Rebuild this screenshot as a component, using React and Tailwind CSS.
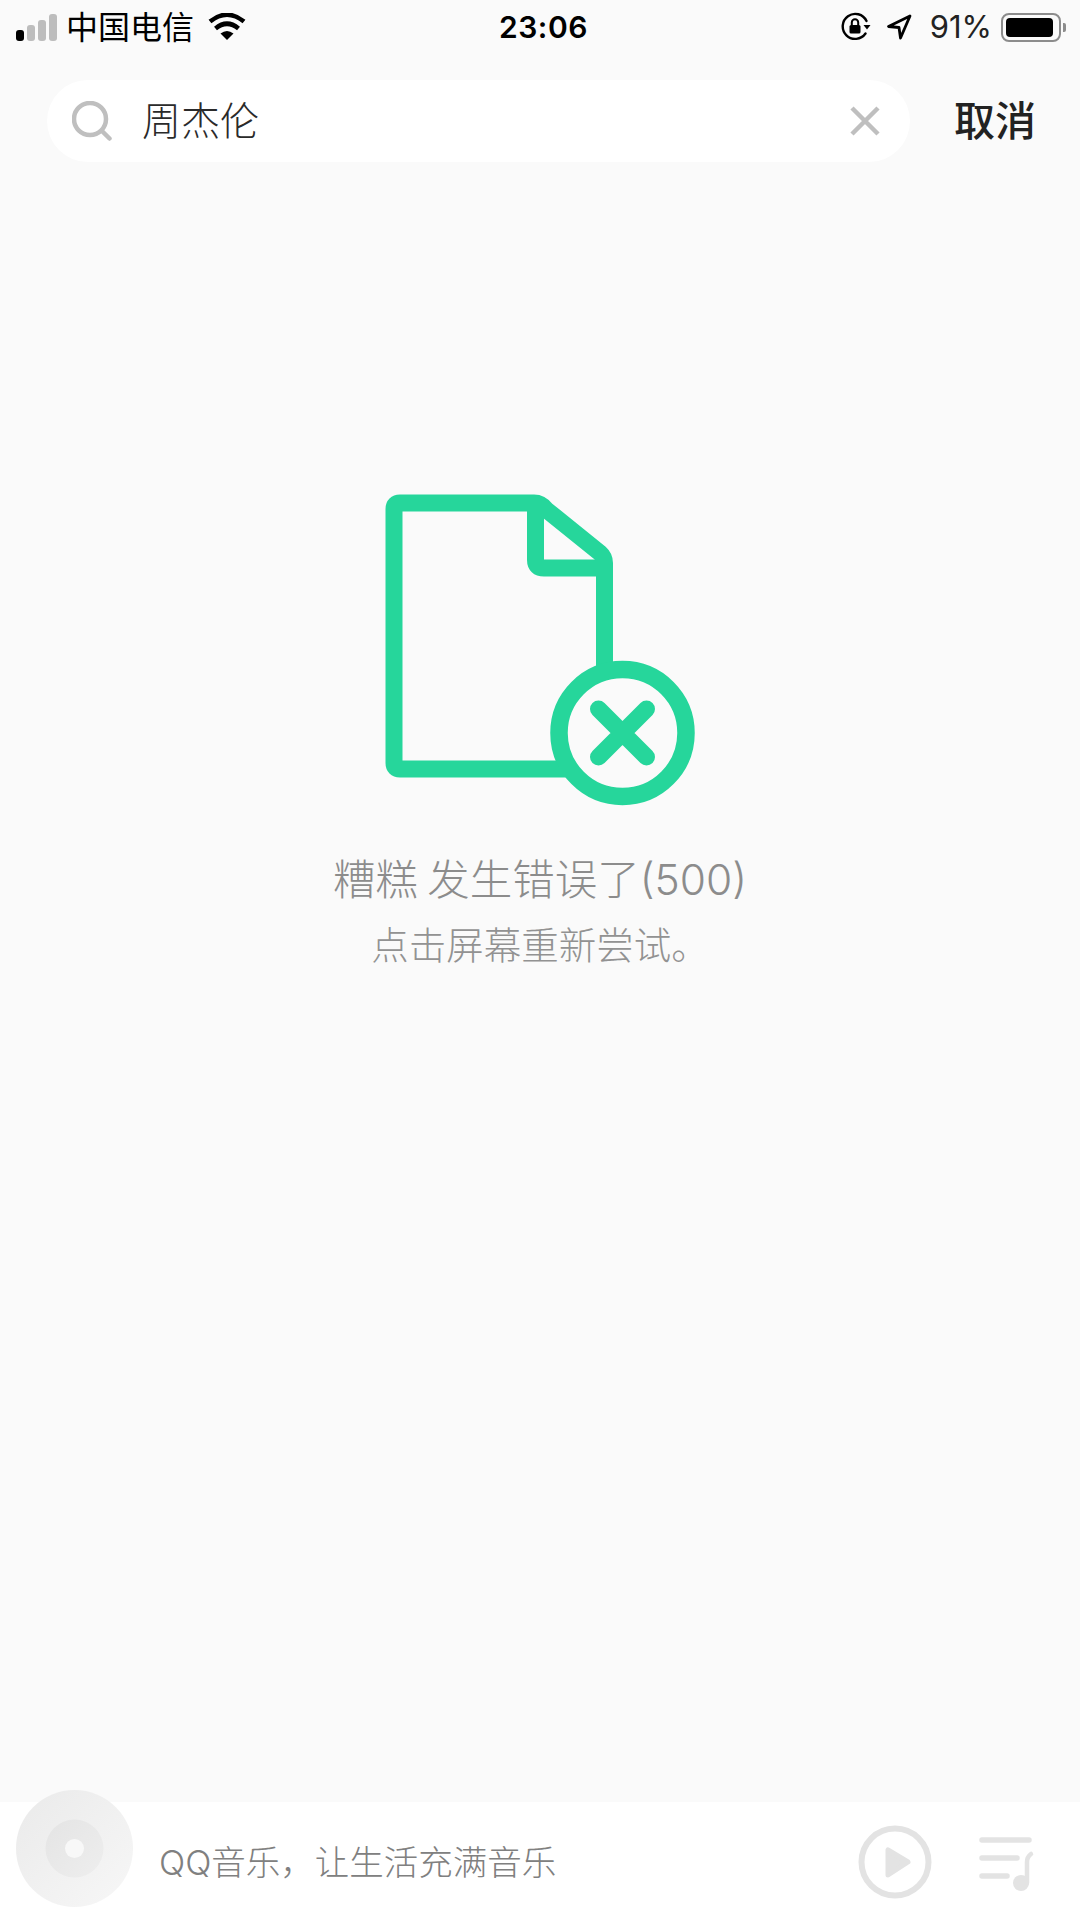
const cjk = { fontFamily: '"Noto Sans CJK SC", sans-serif' };
const latin = { fontFamily: 'Inter, "Noto Sans CJK SC", sans-serif' };

function Signal() {
  return (
    <div className="flex items-end gap-[3px] w-[43px] h-[27px]">
      <div className="w-[8px] h-[11px] rounded-[3px] bg-black" />
      <div className="w-[8px] h-[16px] rounded-[3px] bg-[#bdbdbd]" />
      <div className="w-[8px] h-[21px] rounded-[3px] bg-[#bdbdbd]" />
      <div className="w-[8px] h-[27px] rounded-[3px] bg-[#bdbdbd]" />
    </div>
  );
}

function Wifi() {
  return (
    <svg width="38" height="28" viewBox="0 0 38 28" fill="none">
      <path d="M19 27 L12.5 20.5 Q19 15.5 25.5 20.5 Z" fill="#000" />
      <path d="M7.5 15.5 Q19 6 30.5 15.5" stroke="#000" strokeWidth="4.6" />
      <path d="M2 8.5 Q19 -5 36 8.5" stroke="#000" strokeWidth="4.6" />
    </svg>
  );
}

function RotationLock() {
  return (
    <svg width="30" height="30" viewBox="0 0 30 30" fill="none">
      <path d="M24.5 21.5 A12.5 12.5 0 1 1 25.5 9" stroke="#000" strokeWidth="2.4" strokeLinecap="round" />
      <path d="M22.5 13 L29.5 13 L26 17.5 Z" fill="#000" />
      <rect x="8.5" y="13" width="11" height="8.5" rx="1.5" fill="#000" />
      <path d="M10.8 13 V10.5 A3.2 3.2 0 0 1 17.2 10.5 V13" stroke="#000" strokeWidth="2" />
    </svg>
  );
}

function LocationArrow() {
  return (
    <svg width="26" height="26" viewBox="0 0 26 26" fill="none">
      <path d="M24 2 L2.5 12.5 L13 13.5 L14.5 24 Z" stroke="#000" strokeWidth="2.8" strokeLinejoin="round" />
    </svg>
  );
}

function Battery() {
  return (
    <div className="flex items-center gap-[2px]">
      <div className="w-[60px] h-[29px] rounded-[8px] border-2 border-[#8c8c8c] p-[3px]">
        <div className="w-[47px] h-full rounded-[4px] bg-black" />
      </div>
      <div className="w-[3px] h-[9px] rounded-r-[2px] bg-[#8c8c8c]" />
    </div>
  );
}

function StatusBar() {
  return (
    <div className="h-[54px] flex items-center justify-between pl-[16px] pr-[14px] text-black shrink-0">
      <div className="flex items-center w-[300px]">
        <Signal />
        <span className="ml-[7px] mb-[5px] text-[32px] leading-none" style={cjk}>中国电信</span>
        <span className="ml-[14px]"><Wifi /></span>
      </div>
      <span className="ml-[5px] text-[30px] font-semibold leading-none tracking-[0.5px]" style={latin}>23:06</span>
      <div className="flex items-center w-[300px] justify-end">
        <RotationLock />
        <span className="ml-[15px]"><LocationArrow /></span>
        <span className="ml-[18px] mb-[2px] text-[31px] leading-none text-[#222]" style={latin}>91%</span>
        <span className="ml-[9px]"><Battery /></span>
      </div>
    </div>
  );
}

function SearchBar() {
  return (
    <div className="flex items-center pl-[47px] mt-[26px] shrink-0">
      <div className="w-[863px] h-[82px] rounded-full bg-white flex items-center pl-[25px] pr-[29px]">
        <svg width="40" height="40" viewBox="0 0 40 40" fill="none">
          <circle cx="18" cy="18" r="16" stroke="#bfbfbf" strokeWidth="4.5" />
          <path d="M30 30 L37.5 37.5" stroke="#bfbfbf" strokeWidth="4.5" strokeLinecap="round" />
        </svg>
        <span className="ml-[30px] mb-[6px] text-[39px] leading-none font-light text-[#2a2a2a] flex-1" style={cjk}>周杰伦</span>
        <svg width="32" height="32" viewBox="0 0 32 32" fill="none">
          <path d="M3 3 L29 29 M29 3 L3 29" stroke="#bfbfbf" strokeWidth="4.5" />
        </svg>
      </div>
      <span className="ml-[44px] mb-[6px] text-[41px] leading-none font-medium text-[#222]" style={cjk}>取消</span>
    </div>
  );
}

function ErrorIcon() {
  return (
    <svg width="312" height="312" viewBox="385 494 312 312" fill="none">
      <g stroke="#26d69b" strokeWidth="17" strokeLinejoin="round">
        <path d="M575 769 H400 Q394 769 394 763 V509 Q394 503 400 503 H534 Q541 503 546 509.5 L600 553 Q604.5 557 604.5 563 V672" />
        <path d="M535.5 505 V560 Q535.5 568 544 568 H604" />
      </g>
      <circle cx="622.5" cy="733" r="63.5" fill="#fafafa" stroke="#26d69b" strokeWidth="17.5" />
      <path d="M598.5 709 L646.5 757 M646.5 709 L598.5 757" stroke="#26d69b" strokeWidth="17" strokeLinecap="round" />
    </svg>
  );
}

function ErrorState() {
  return (
    <div className="flex-1 flex flex-col items-center pt-[332px]">
      <div className="ml-[1px]">
        <ErrorIcon />
      </div>
      <p className="mt-[46px] text-[42.5px] leading-[50px] font-light text-[#8c8c8c]" style={latin}>
        <span style={cjk}>糟糕 发生错误了</span>(500)
      </p>
      <p className="mt-[15px] text-[37.5px] leading-[46px] font-light text-[#929292]" style={cjk}>点击屏幕重新尝试。</p>
    </div>
  );
}

function Disc() {
  return (
    <svg width="117" height="117" viewBox="0 0 117 117">
      <defs>
        <linearGradient id="discOuter" x1="0" y1="0" x2="1" y2="1">
          <stop offset="0" stopColor="#eaeaea" />
          <stop offset="1" stopColor="#f7f7f7" />
        </linearGradient>
        <linearGradient id="discInner" x1="0" y1="0" x2="1" y2="1">
          <stop offset="0" stopColor="#e4e4e4" />
          <stop offset="1" stopColor="#eeeeee" />
        </linearGradient>
      </defs>
      <circle cx="58.5" cy="58.5" r="58.5" fill="url(#discOuter)" />
      <circle cx="58.5" cy="58.5" r="29" fill="url(#discInner)" />
      <circle cx="58.5" cy="58.5" r="9.5" fill="#f8f8f8" />
    </svg>
  );
}

function PlayerBar() {
  return (
    <div className="h-[118px] bg-white flex items-center shrink-0 pl-[16px]">
      <div className="mb-[26px]">
        <Disc />
      </div>
      <span className="ml-[26px] mt-[4px] text-[34.5px] leading-none font-light text-[#808080] flex-1" style={latin}>QQ音乐，让生活充满音乐</span>
      <svg width="74" height="74" viewBox="0 0 74 74" fill="none" className="ml-[2px] mt-[2px]">
        <circle cx="37" cy="37" r="33.5" stroke="#e3e3e3" strokeWidth="6" />
        <path d="M30 25 V50 L50 37 Z" fill="#e3e3e3" stroke="#e3e3e3" strokeWidth="5" strokeLinejoin="round" />
      </svg>
      <svg width="56" height="54" viewBox="0 0 56 54" fill="none" className="ml-[47px] mr-[45px] mt-[6px]">
        <path d="M3 3 H50 M3 21 H38 M3 39 H28" stroke="#e3e3e3" strokeWidth="5.5" strokeLinecap="round" />
        <circle cx="42" cy="46" r="8" fill="#e3e3e3" />
        <path d="M48 46 V25 Q48 20 52 17" stroke="#e3e3e3" strokeWidth="4.5" strokeLinecap="round" />
      </svg>
    </div>
  );
}

export default function App() {
  return (
    <div className="w-[1080px] h-[1920px] bg-[#fafafa] flex flex-col overflow-hidden">
      <StatusBar />
      <SearchBar />
      <ErrorState />
      <PlayerBar />
    </div>
  );
}
